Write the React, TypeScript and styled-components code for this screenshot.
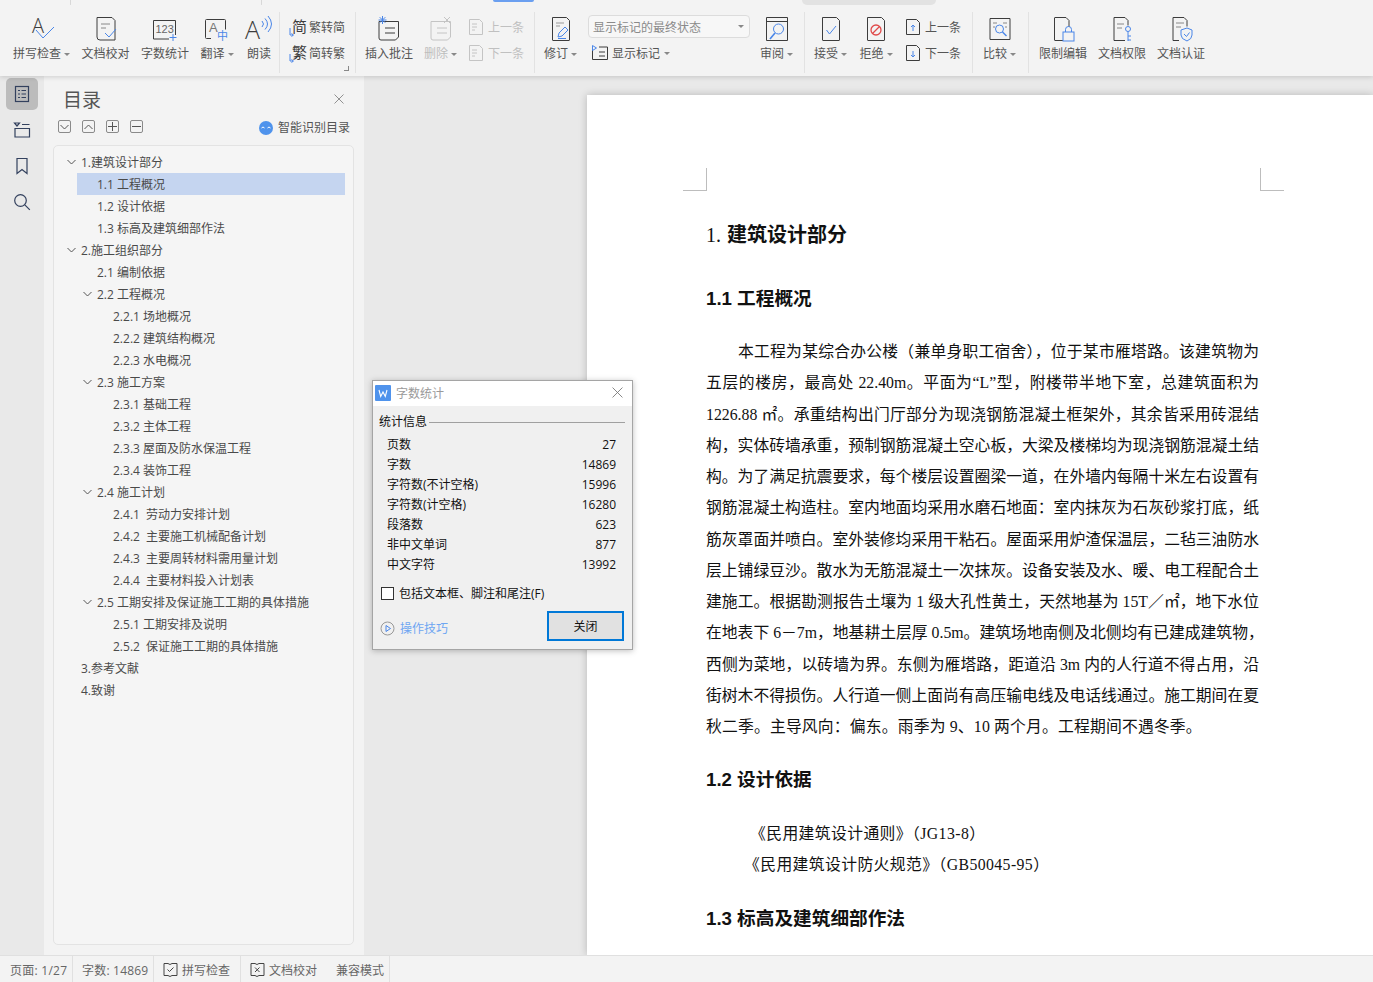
import React from "react";
import styled, { createGlobalStyle } from "styled-components";

const UI_FONT = `"Open Sans", "Noto Sans CJK SC", sans-serif`;
const DOC_FONT = `"Liberation Serif", "Noto Sans CJK SC", serif`;
const BLUE = "#4a86e8";
const INK = "#3c3c3c";

const GlobalStyle = createGlobalStyle`
  html, body {
    margin: 0;
    width: 1373px;
    height: 982px;
    overflow: hidden;
  }
  body {
    font-family: ${UI_FONT};
    font-size: 12px;
  }
  * { box-sizing: border-box; }
`;

const Shell = styled.div`
  position: relative;
  width: 1373px;
  height: 982px;
  display: flex;
  flex-direction: column;
  overflow: hidden;
  background: #e9e9e9;
`;

/* ribbon */
const Ribbon = styled.div`
  position: relative;
  z-index: 2;
  height: 76px;
  flex: none;
  display: flex;
  padding: 12px 0 3px;
  background: #f3f3f3;
  box-shadow: 0 1px 5px rgba(0, 0, 0, 0.16);
`;

const TabEdge = styled.div<{ $left: number; $width: number; $height: number; $color: string }>`
  position: absolute;
  top: 0;
  left: ${(p) => p.$left}px;
  width: ${(p) => p.$width}px;
  height: ${(p) => p.$height}px;
  background: ${(p) => p.$color};
  border-radius: 0 0 8px 8px;
`;

const Group = styled.div<{ $width: number; $pad?: number; $gap?: number; $last?: boolean }>`
  position: relative;
  width: ${(p) => p.$width}px;
  flex: none;
  display: flex;
  gap: ${(p) => p.$gap ?? 11}px;
  padding: 3px 0 0 ${(p) => p.$pad ?? 9}px;
  border-right: ${(p) => (p.$last ? "none" : "1px solid #e2e2e2")};
`;

const Launcher = styled.span`
  position: absolute;
  right: 6px;
  bottom: 2px;
  width: 5px;
  height: 5px;
  border-right: 1px solid #888;
  border-bottom: 1px solid #888;
`;

const Tool = styled.div<{ $off?: boolean }>`
  display: flex;
  flex-direction: column;
  align-items: center;
  flex: none;
  color: ${(p) => (p.$off ? "#bdbdbd" : "#555")};
  white-space: nowrap;
`;

const ToolIcon = styled.div`
  height: 28px;
  display: flex;
  align-items: center;
  justify-content: center;
`;

const ToolLabel = styled.div`
  height: 16px;
  margin-top: 3px;
  line-height: 16px;
  display: flex;
  align-items: center;
`;

const Caret = styled.i`
  width: 0;
  height: 0;
  margin-left: 3px;
  border-left: 3px solid transparent;
  border-right: 3px solid transparent;
  border-top: 3px solid #888;
`;

const SmallStack = styled.div`
  display: flex;
  flex-direction: column;
  gap: 2px;
  flex: none;
`;

const SmallTool = styled.div<{ $off?: boolean }>`
  height: 24px;
  display: flex;
  align-items: center;
  gap: 2px;
  color: ${(p) => (p.$off ? "#c0c0c0" : "#555")};
  white-space: nowrap;
`;

const MarkupColumn = styled.div`
  width: 162px;
  margin-right: -1px;
  flex: none;
  display: flex;
  flex-direction: column;
`;

const MarkupSelect = styled.div`
  height: 23px;
  display: flex;
  align-items: center;
  justify-content: space-between;
  padding: 0 5px 0 4px;
  color: #8a8a8a;
  background: #f7f7f7;
  border: 1px solid #dcdcdc;
  border-radius: 4px;
`;

const MarkupToggle = styled.div`
  height: 16px;
  margin-top: 7px;
  padding-left: 3px;
  display: flex;
  align-items: center;
  gap: 3px;
  color: #555;
  ${Caret} {
    margin-left: 1px;
  }
`;

/* main area */
const Main = styled.div`
  flex: 1;
  min-height: 0;
  display: flex;
`;

const Rail = styled.div`
  width: 44px;
  flex: none;
  display: flex;
  flex-direction: column;
  align-items: center;
  gap: 4px;
  padding-top: 2px;
  background: #e9e9e9;
`;

const RailButton = styled.div<{ $active?: boolean }>`
  width: 32px;
  height: 32px;
  display: flex;
  align-items: center;
  justify-content: center;
  border-radius: 5px;
  background: ${(p) => (p.$active ? "#bcbcbc" : "transparent")};
`;

const Panel = styled.div`
  width: 320px;
  flex: none;
  display: flex;
  flex-direction: column;
  background: #f3f3f3;
`;

const PanelHead = styled.div`
  height: 44px;
  flex: none;
  display: flex;
  align-items: center;
  justify-content: space-between;
  padding: 2px 20px 0 19px;
`;

const PanelTitle = styled.div`
  margin-top: 2px;
  font-size: 19px;
  line-height: 24px;
  color: #555;
`;

const PanelTools = styled.div`
  height: 25px;
  flex: none;
  display: flex;
  align-items: flex-start;
  gap: 11px;
  padding: 0 14px 0 14px;
`;

const SquareButton = styled.div`
  width: 13px;
  height: 13px;
  display: flex;
  align-items: center;
  justify-content: center;
  border: 1px solid #8a8a8a;
  border-radius: 2px;
`;

const SmartLink = styled.div`
  margin: 1px 0 0 auto;
  display: flex;
  align-items: center;
  gap: 5px;
  color: #555;
  line-height: 14px;
`;

const TreeBox = styled.div`
  width: 301px;
  height: 800px;
  margin-left: 9px;
  padding-top: 5px;
  background: #f5f5f5;
  border: 1px solid #e3e3e3;
  border-radius: 5px;
`;

const TreeRow = styled.div<{ $level: number; $selected?: boolean }>`
  height: 22px;
  margin: 0 8px 0 ${(p) => 7 + (p.$level - 1) * 16}px;
  display: flex;
  align-items: center;
  color: #4a4a4a;
  white-space: pre;
  background: ${(p) => (p.$selected ? "#c5d5f0" : "transparent")};
`;

const ChevronSlot = styled.span`
  width: 20px;
  flex: none;
  display: flex;
  justify-content: center;
`;

/* document */
const DocArea = styled.div`
  flex: 1;
  min-width: 0;
  padding: 19px 0 0 223px;
  overflow: hidden;
  background: #e9e9e9;
`;

const Page = styled.div`
  height: 100%;
  padding: 73px 0 0 96px;
  overflow: hidden;
  background: #fff;
  box-shadow: 0 0 8px rgba(0, 0, 0, 0.22);
`;

const CropRow = styled.div`
  width: 601px;
  height: 23px;
  display: flex;
  justify-content: space-between;
`;

const CropMark = styled.div<{ $side: "left" | "right" }>`
  width: 24px;
  height: 23px;
  border-bottom: 1px solid #bdbdbd;
  border-${(p) => (p.$side === "left" ? "right" : "left")}: 1px solid #bdbdbd;
`;

const DocBody = styled.div`
  width: 553px;
  margin-left: 23px;
  color: #111;
  font-family: ${DOC_FONT};
`;

const Heading1 = styled.div`
  margin-top: 30px;
  height: 28px;
  line-height: 28px;
  font-size: 20px;
  font-weight: 700;
  color: #111;
`;

const HeadingNumber = styled.span`
  margin-right: 1px;
  font-weight: 400;
`;

const Heading2 = styled.div<{ $top: number }>`
  margin-top: ${(p) => p.$top}px;
  height: 28px;
  line-height: 28px;
  font-size: 18.67px;
  font-weight: 700;
  font-family: "Liberation Sans", "Noto Sans CJK SC", sans-serif;
`;

const BodyText = styled.div`
  margin-top: 23px;
  font-size: 15.8px;
`;

const BodyLine = styled.div<{ $first?: boolean; $last?: boolean }>`
  height: 31.25px;
  line-height: 31.25px;
  padding-left: ${(p) => (p.$first ? 32 : 0)}px;
  white-space: nowrap;
  text-align: justify;
  text-align-last: ${(p) => (p.$last ? "left" : "justify")};
  letter-spacing: ${(p) => (p.$last ? 0.18 : 0)}px;
`;

const RefList = styled.div`
  margin-top: 24px;
  font-size: 15.8px;
  letter-spacing: 0.4px;
`;

const RefLine = styled.div<{ $indent: number }>`
  height: 31px;
  line-height: 31px;
  padding-left: ${(p) => p.$indent}px;
  white-space: nowrap;
`;

/* status bar */
const StatusBar = styled.div`
  height: 27px;
  flex: none;
  display: flex;
  align-items: center;
  background: #f3f3f3;
  border-top: 1px solid #e0e0e0;
  color: #666;
`;

const StatusCell = styled.div<{ $width: number; $pad: number; $track?: number }>`
  width: ${(p) => p.$width}px;
  height: 100%;
  flex: none;
  display: flex;
  align-items: center;
  gap: 4px;
  padding: 1px 0 0 ${(p) => p.$pad}px;
  border-right: 1px solid #e0e0e0;
  letter-spacing: ${(p) => p.$track ?? 0}px;
  white-space: nowrap;
`;

const StatusMode = styled.span`
  margin-left: 15px;
`;

/* word count dialog */
const Dialog = styled.div`
  position: absolute;
  z-index: 5;
  left: 372px;
  top: 380px;
  width: 261px;
  height: 270px;
  display: flex;
  flex-direction: column;
  background: #f0f0f0;
  border: 1px solid #a5a5a5;
  box-shadow: 0 1px 6px rgba(0, 0, 0, 0.25);
  color: #111;
`;

const DialogTitle = styled.div`
  height: 25px;
  flex: none;
  display: flex;
  align-items: center;
  gap: 5px;
  padding: 0 9px 2px 2px;
  background: #fff;
  color: #9a9a9a;
`;

const DialogCaption = styled.span`
  flex: 1;
`;

const DialogBody = styled.div`
  flex: 1;
  display: flex;
  flex-direction: column;
  padding: 8px 7px 0 6px;
`;

const Legend = styled.div`
  height: 16px;
  display: flex;
  align-items: center;
  gap: 2px;
  line-height: 16px;
  &::after {
    content: "";
    flex: 1;
    height: 1px;
    background: #a0a0a0;
  }
`;

const StatList = styled.div`
  margin-top: 4px;
  padding: 0 9px 0 8px;
`;

const StatRow = styled.div`
  height: 20px;
  display: flex;
  align-items: center;
  justify-content: space-between;
`;

const CheckRow = styled.div`
  margin: 9px 0 0 2px;
  height: 20px;
  display: flex;
  align-items: center;
  gap: 5px;
`;

const CheckBox = styled.span`
  width: 13px;
  height: 13px;
  background: #fff;
  border: 1px solid #333;
`;

const DialogFoot = styled.div`
  margin-top: 8px;
  padding-left: 1px;
  display: flex;
  align-items: center;
`;

const TipLink = styled.div`
  margin-top: 4px;
  display: flex;
  align-items: center;
  gap: 5px;
  color: #6ea6f2;
`;

const CloseButton = styled.div`
  width: 77px;
  height: 30px;
  margin: 0 1px 0 auto;
  display: flex;
  align-items: center;
  justify-content: center;
  color: #111;
  background: #e1e1e1;
  border: 2px solid #0078d7;
`;

/* drawings */
const Svg = styled.svg`
  display: block;
  flex: none;
  fill: none;
  stroke-width: 1;
  overflow: visible;
`;

const LightLetter = styled.text`
  font-family: "Open Sans", "Liberation Sans", sans-serif;
  font-weight: 300;
`;

type IconProps = { off?: boolean };

const ink = (off?: boolean) => (off ? "#c4c4c4" : INK);

const SpellIcon = () => (
  <Svg width="28" height="28" viewBox="0 0 28 28">
    <LightLetter x="4" y="18" fontSize="20" fill={INK}>A</LightLetter>
    <path d="M8 15l7 8L26 12" stroke={BLUE} />
  </Svg>
);

const ProofIcon = () => (
  <Svg width="28" height="28" viewBox="0 0 28 28">
    <path d="M5 2.500h15l3 3V25H8q-3 0-3-3z" stroke={INK} />
    <path d="M9 9h9M9 13h5" stroke="#888" />
    <path d="M13 18l4 4 7-8" stroke={BLUE} />
  </Svg>
);

const CountIcon = () => (
  <Svg width="28" height="28" viewBox="0 0 28 28">
    <path d="M2.500 5.500h22V20M2.500 5.500V24H18" stroke={INK} />
    <text x="4.500" y="18" fontSize="11" fontFamily="Liberation Sans" fill="#666">123</text>
    <path d="M22 19v7M18.500 22.500h7" stroke={BLUE} />
  </Svg>
);

const TranslateIcon = () => (
  <Svg width="28" height="28" viewBox="0 0 28 28">
    <path d="M8 23.500H3.500q-1 0-1-1V5.500q0-1 1-1h18q1 0 1 1v9" stroke={INK} />
    <text x="6" y="17" fontSize="13" fontFamily="Liberation Sans" fill="#777">A</text>
    <text x="14" y="25" fontSize="11" fontFamily="Noto Sans CJK SC" fill={BLUE}>中</text>
  </Svg>
);

const ReadIcon = () => (
  <Svg width="28" height="28" viewBox="0 0 28 28">
    <LightLetter x="0" y="24" fontSize="25" fill={INK}>A</LightLetter>
    <path d="M17 6q3 3 0 6M20 3.500q5 5.500 0 11M23 1q7 8 0 16" stroke={BLUE} />
  </Svg>
);

const ConvertIcon = ({ ch }: { ch: string }) => (
  <Svg width="18" height="22" viewBox="0 0 18 22">
    <text x="3" y="16" fontSize="15" fontFamily="Noto Sans CJK SC" fill={INK}>{ch}</text>
    <path d="M1 12v7h3M2.500 17.500L4.500 19l-2 1.500" stroke={BLUE} />
  </Svg>
);

const CommentIcon = ({ off }: IconProps) => (
  <Svg width="28" height="28" viewBox="0 0 28 28">
    <path d="M4 6.500h19.500V22l-3 3H6q-2 0-2-2z" stroke={ink(off)} />
    <path d="M10 13h10M10 18h10" stroke={ink(off)} />
    {off ? (
      <path d="M17 2l6 6M23 2l-6 6" stroke="#c4c4c4" />
    ) : (
      <path d="M7.500 1v8M3.500 5h8M4.700 2.200l5.600 5.600M10.300 2.200L4.700 7.800" stroke={BLUE} />
    )}
  </Svg>
);

const PrevNextIcon = ({ off, down }: IconProps & { down?: boolean }) => (
  <Svg width="18" height="18" viewBox="0 0 18 18">
    <path d="M1.500 1.500h10l3 3v12h-13z" stroke={ink(off)} />
    {off ? (
      <path d="M4 6h5M4 9h5M4 12h3" stroke="#c4c4c4" />
    ) : down ? (
      <path d="M8 7v6M6 11l2 2 2-2" stroke={BLUE} />
    ) : (
      <path d="M8 13V7M6 9l2-2 2 2" stroke={BLUE} />
    )}
  </Svg>
);

const PageBase = ({ children }: { children?: React.ReactNode }) => (
  <Svg width="28" height="28" viewBox="0 0 28 28">
    <path d="M5.500 2.500h14l3 3V25q0 .5-.5.5H6q-.5 0-.5-.5z" stroke={INK} />
    {children}
  </Svg>
);

const ReviseIcon = () => (
  <PageBase>
    <path d="M9 8h8M9 11h4" stroke="#999" />
    <path d="M11 22l1-4 6-6 3 3-6 6zM11 23.500h8" stroke={BLUE} />
  </PageBase>
);

const ReviewIcon = () => (
  <Svg width="28" height="28" viewBox="0 0 28 28">
    <path d="M3.500 2.500h21v23h-21zM3.500 6.500h21" stroke={INK} />
    <circle cx="15.500" cy="14" r="5" stroke={BLUE} />
    <path d="M12 18l-5 6" stroke={BLUE} strokeWidth="1.600" />
  </Svg>
);

const AcceptIcon = () => (
  <PageBase>
    <path d="M9.500 15l3 4 6.500-8" stroke={BLUE} />
  </PageBase>
);

const RejectIcon = () => (
  <PageBase>
    <circle cx="14" cy="15" r="5" stroke="#e04a4a" strokeWidth="1.300" />
    <path d="M10.500 18.500l7-7" stroke="#e04a4a" strokeWidth="1.300" />
  </PageBase>
);

const CompareIcon = () => (
  <Svg width="28" height="28" viewBox="0 0 28 28">
    <path d="M4 3.500h20v21H4z" stroke={INK} />
    <path d="M7 8h4M17 8h4M7 12h2M19 12h2" stroke="#888" />
    <circle cx="13.500" cy="14" r="4" stroke={BLUE} />
    <path d="M16.500 17l4 4" stroke={BLUE} strokeWidth="1.400" />
  </Svg>
);

const LockIcon = () => (
  <Svg width="28" height="28" viewBox="0 0 28 28">
    <path d="M14 25.500H6q-.5 0-.5-.5V3q0-.5.500-.5h11l3 3V12" stroke={INK} />
    <rect x="14" y="17" width="11" height="9" stroke={BLUE} />
    <path d="M16.500 17v-2.500a3 3 0 0 1 6 0V17" stroke={BLUE} />
  </Svg>
);

const KeyIcon = () => (
  <Svg width="28" height="28" viewBox="0 0 28 28">
    <path d="M17 25.500H6V2.500h11l3 3v5" stroke={INK} />
    <path d="M9 9h7M9 13h5" stroke="#888" />
    <circle cx="20" cy="14" r="2.500" stroke={BLUE} />
    <path d="M20 16.500V26M20 21h3M20 25h3" stroke={BLUE} />
  </Svg>
);

const ShieldIcon = () => (
  <Svg width="28" height="28" viewBox="0 0 28 28">
    <path d="M12 25.500H6V2.500h11l3 3v6" stroke={INK} />
    <path d="M9 8h8M9 12h5" stroke="#888" />
    <path d="M14 15l6-2 5 2v5q0 4-5 6-6-2-6-6z" stroke={BLUE} />
    <path d="M17 19l2.500 2.500 3-4" stroke={BLUE} />
  </Svg>
);

const MarkupIcon = () => (
  <Svg width="18" height="16" viewBox="0 0 18 16">
    <path d="M1.500 4v10.500h15V2H8" stroke={INK} />
    <path d="M8 7h6M8 11h6" stroke={INK} />
    <path d="M1.500 0.500v5l4-2.500z" stroke={BLUE} />
  </Svg>
);

const Cross = ({ size, color }: { size: number; color: string }) => (
  <Svg width={size} height={size} viewBox="0 0 10 10">
    <path d="M.5.500l9 9M9.500.500l-9 9" stroke={color} strokeWidth={0.8} />
  </Svg>
);

const Chevron = ({ up }: { up?: boolean }) => (
  <Svg width="9" height="6" viewBox="0 0 9 6">
    <path d={up ? "M.5 5L4.500 1l4 4" : "M.5 1l4 4 4-4"} stroke="#555" />
  </Svg>
);

const RAIL_COLOR = "#33415e";

const RailOutline = () => (
  <Svg width="16" height="18" viewBox="0 0 16 18">
    <rect x="1.500" y="1.500" width="13" height="15" stroke={RAIL_COLOR} strokeWidth="1.200" />
    <path d="M4 5.500h2M7.500 5.500H12M4 9h2M7.500 9H12M4 12.500h2M7.500 12.500H12" stroke={RAIL_COLOR} />
  </Svg>
);

const RailFolder = () => (
  <Svg width="18" height="16" viewBox="0 0 18 16">
    <path d="M1.500 1h5l-2.500 3zM9 2.500h7.500M2 6.500h14.500v8.500H2z" stroke={RAIL_COLOR} strokeWidth="1.200" />
  </Svg>
);

const RailBookmark = () => (
  <Svg width="14" height="18" viewBox="0 0 14 18">
    <path d="M2 1.500h10v15l-5-4-5 4z" stroke={RAIL_COLOR} strokeWidth="1.200" />
  </Svg>
);

const RailSearch = () => (
  <Svg width="18" height="18" viewBox="0 0 18 18">
    <circle cx="7.500" cy="7.500" r="5.800" stroke={RAIL_COLOR} strokeWidth="1.200" />
    <path d="M11.800 11.800l5 5" stroke={RAIL_COLOR} strokeWidth="1.200" />
  </Svg>
);

const SmartIcon = () => (
  <Svg width="14" height="14" viewBox="0 0 14 14">
    <circle cx="7" cy="7" r="7" fill="#4f93ec" />
    <path d="M2.500 7q1.500-2 3 0M8.500 7q1.500-2 3 0" stroke="#fff" />
  </Svg>
);

const StatusCheck = ({ cross }: { cross?: boolean }) => (
  <Svg width="15" height="15" viewBox="0 0 15 15">
    <path d="M1 1.500h4l2 1 2-1h5v12H9l-2 1-2-1H1z" stroke="#444" />
    <path d={cross ? "M5 5.500l4.500 4.500M9.500 5.500L5 10" : "M4.500 7.500l2 2 4-4"} stroke="#444" />
  </Svg>
);

const WpsLogo = () => (
  <Svg width="16" height="16" viewBox="0 0 16 16">
    <rect width="16" height="16" rx="1" fill="#4f93ec" />
    <path d="M4 5l1.700 6.500L8 7l2.300 4.500L12 5" stroke="#fff" strokeWidth="1.100" />
  </Svg>
);

const PlayIcon = () => (
  <Svg width="15" height="15" viewBox="0 0 15 15">
    <circle cx="7.500" cy="7.500" r="6.500" stroke="#999" />
    <path d="M6 4.500v6l4.500-3z" stroke={BLUE} />
  </Svg>
);

/* data */
type TreeItem = { level: number; text: string; open?: boolean; selected?: boolean };

const tree: TreeItem[] = [
  { level: 1, text: "1.建筑设计部分", open: true },
  { level: 2, text: "1.1 工程概况", selected: true },
  { level: 2, text: "1.2 设计依据" },
  { level: 2, text: "1.3 标高及建筑细部作法" },
  { level: 1, text: "2.施工组织部分", open: true },
  { level: 2, text: "2.1 编制依据" },
  { level: 2, text: "2.2 工程概况", open: true },
  { level: 3, text: "2.2.1 场地概况" },
  { level: 3, text: "2.2.2 建筑结构概况" },
  { level: 3, text: "2.2.3 水电概况" },
  { level: 2, text: "2.3 施工方案", open: true },
  { level: 3, text: "2.3.1 基础工程" },
  { level: 3, text: "2.3.2 主体工程" },
  { level: 3, text: "2.3.3 屋面及防水保温工程" },
  { level: 3, text: "2.3.4 装饰工程" },
  { level: 2, text: "2.4 施工计划", open: true },
  { level: 3, text: "2.4.1  劳动力安排计划" },
  { level: 3, text: "2.4.2  主要施工机械配备计划" },
  { level: 3, text: "2.4.3  主要周转材料需用量计划" },
  { level: 3, text: "2.4.4  主要材料投入计划表" },
  { level: 2, text: "2.5 工期安排及保证施工工期的具体措施", open: true },
  { level: 3, text: "2.5.1 工期安排及说明" },
  { level: 3, text: "2.5.2  保证施工工期的具体措施" },
  { level: 1, text: "3.参考文献" },
  { level: 1, text: "4.致谢" },
];

const stats = [
  ["页数", "27"],
  ["字数", "14869"],
  ["字符数(不计空格)", "15996"],
  ["字符数(计空格)", "16280"],
  ["段落数", "623"],
  ["非中文单词", "877"],
  ["中文字符", "13992"],
];

const bodyLines = [
  "本工程为某综合办公楼（兼单身职工宿舍），位于某市雁塔路。该建筑物为",
  "五层的楼房，最高处 22.40m。平面为“L”型，附楼带半地下室，总建筑面积为",
  "1226.88 ㎡。承重结构出门厅部分为现浇钢筋混凝土框架外，其余皆采用砖混结",
  "构，实体砖墙承重，预制钢筋混凝土空心板，大梁及楼梯均为现浇钢筋混凝土结",
  "构。为了满足抗震要求，每个楼层设置圈梁一道，在外墙内每隔十米左右设置有",
  "钢筋混凝土构造柱。室内地面均采用水磨石地面：室内抹灰为石灰砂浆打底，纸",
  "筋灰罩面并喷白。室外装修均采用干粘石。屋面采用炉渣保温层，二毡三油防水",
  "层上铺绿豆沙。散水为无筋混凝土一次抹灰。设备安装及水、暖、电工程配合土",
  "建施工。根据勘测报告土壤为 1 级大孔性黄土，天然地基为 15T／㎡，地下水位",
  "在地表下 6－7m，地基耕土层厚 0.5m。建筑场地南侧及北侧均有已建成建筑物，",
  "西侧为菜地，以砖墙为界。东侧为雁塔路，距道沿 3m 内的人行道不得占用，沿",
  "街树木不得损伤。人行道一侧上面尚有高压输电线及电话线通过。施工期间在夏",
  "秋二季。主导风向：偏东。雨季为 9、10 两个月。工程期间不遇冬季。",
];

function RibbonTool({
  icon,
  label,
  caret,
  off,
}: {
  icon: React.ReactNode;
  label: string;
  caret?: boolean;
  off?: boolean;
}) {
  return (
    <Tool $off={off}>
      <ToolIcon>{icon}</ToolIcon>
      <ToolLabel>
        {label}
        {caret && <Caret />}
      </ToolLabel>
    </Tool>
  );
}

function PrevNext({ off }: IconProps) {
  return (
    <SmallStack>
      <SmallTool $off={off}>
        <PrevNextIcon off={off} />
        上一条
      </SmallTool>
      <SmallTool $off={off}>
        <PrevNextIcon off={off} down />
        下一条
      </SmallTool>
    </SmallStack>
  );
}

export default function App() {
  return (
    <Shell>
      <GlobalStyle />
      <Ribbon>
        <TabEdge $left={70} $width={1} $height={5} $color="#d8d8d8" />
        <TabEdge $left={261} $width={1} $height={5} $color="#d8d8d8" />
        <TabEdge $left={493} $width={41} $height={2} $color="#6a9ff0" />
        <TabEdge $left={802} $width={134} $height={5} $color="#e2e2e2" />

        <Group $width={280} $pad={13} $gap={11.5}>
          <RibbonTool icon={<SpellIcon />} label="拼写检查" caret />
          <RibbonTool icon={<ProofIcon />} label="文档校对" />
          <RibbonTool icon={<CountIcon />} label="字数统计" />
          <RibbonTool icon={<TranslateIcon />} label="翻译" caret />
          <RibbonTool icon={<ReadIcon />} label="朗读" />
        </Group>
        <Group $width={76}>
          <SmallStack>
            <SmallTool>
              <ConvertIcon ch="简" />
              繁转简
            </SmallTool>
            <SmallTool>
              <ConvertIcon ch="繁" />
              简转繁
            </SmallTool>
          </SmallStack>
          <Launcher />
        </Group>
        <Group $width={179}>
          <RibbonTool icon={<CommentIcon />} label="插入批注" />
          <RibbonTool icon={<CommentIcon off />} label="删除" caret off />
          <PrevNext off />
        </Group>
        <Group $width={270}>
          <RibbonTool icon={<ReviseIcon />} label="修订" caret />
          <MarkupColumn>
            <MarkupSelect>
              显示标记的最终状态
              <Caret />
            </MarkupSelect>
            <MarkupToggle>
              <MarkupIcon />
              显示标记
              <Caret />
            </MarkupToggle>
          </MarkupColumn>
          <RibbonTool icon={<ReviewIcon />} label="审阅" caret />
        </Group>
        <Group $width={168} $gap={12.5}>
          <RibbonTool icon={<AcceptIcon />} label="接受" caret />
          <RibbonTool icon={<RejectIcon />} label="拒绝" caret />
          <PrevNext />
        </Group>
        <Group $width={56} $pad={10}>
          <RibbonTool icon={<CompareIcon />} label="比较" caret />
        </Group>
        <Group $width={200} $pad={10} $last>
          <RibbonTool icon={<LockIcon />} label="限制编辑" />
          <RibbonTool icon={<KeyIcon />} label="文档权限" />
          <RibbonTool icon={<ShieldIcon />} label="文档认证" />
        </Group>
      </Ribbon>

      <Main>
        <Rail>
          <RailButton $active>
            <RailOutline />
          </RailButton>
          <RailButton>
            <RailFolder />
          </RailButton>
          <RailButton>
            <RailBookmark />
          </RailButton>
          <RailButton>
            <RailSearch />
          </RailButton>
        </Rail>

        <Panel>
          <PanelHead>
            <PanelTitle>目录</PanelTitle>
            <Cross size={10} color="#777" />
          </PanelHead>
          <PanelTools>
            <SquareButton>
              <Chevron />
            </SquareButton>
            <SquareButton>
              <Chevron up />
            </SquareButton>
            <SquareButton>
              <Svg width="9" height="9" viewBox="0 0 9 9">
                <path d="M4.500 0v9M0 4.500h9" stroke="#555" />
              </Svg>
            </SquareButton>
            <SquareButton>
              <Svg width="9" height="9" viewBox="0 0 9 9">
                <path d="M0 4.500h9" stroke="#555" />
              </Svg>
            </SquareButton>
            <SmartLink>
              <SmartIcon />
              智能识别目录
            </SmartLink>
          </PanelTools>
          <TreeBox>
            {tree.map((item) => (
              <TreeRow key={item.text} $level={item.level} $selected={item.selected}>
                <ChevronSlot>{item.open && <Chevron />}</ChevronSlot>
                {item.text}
              </TreeRow>
            ))}
          </TreeBox>
        </Panel>

        <DocArea>
          <Page>
            <CropRow>
              <CropMark $side="left" />
              <CropMark $side="right" />
            </CropRow>
            <DocBody>
              <Heading1>
                <HeadingNumber>1.</HeadingNumber> 建筑设计部分
              </Heading1>
              <Heading2 $top={36}>1.1 工程概况</Heading2>
              <BodyText>
                {bodyLines.map((line, i) => (
                  <BodyLine key={line} $first={i === 0} $last={i === bodyLines.length - 1}>
                    {line}
                  </BodyLine>
                ))}
              </BodyText>
              <Heading2 $top={24}>1.2 设计依据</Heading2>
              <RefList>
                <RefLine $indent={44}>《民用建筑设计通则》（JG13-8）</RefLine>
                <RefLine $indent={38}>《民用建筑设计防火规范》（GB50045-95）</RefLine>
              </RefList>
              <Heading2 $top={25}>1.3 标高及建筑细部作法</Heading2>
            </DocBody>
          </Page>
        </DocArea>
      </Main>

      <StatusBar>
        <StatusCell $width={73} $pad={10} $track={0.25}>页面: 1/27</StatusCell>
        <StatusCell $width={81} $pad={9} $track={0.2}>字数: 14869</StatusCell>
        <StatusCell $width={87} $pad={9}>
          <StatusCheck />
          拼写检查
        </StatusCell>
        <StatusCell $width={149} $pad={9}>
          <StatusCheck cross />
          文档校对
          <StatusMode>兼容模式</StatusMode>
        </StatusCell>
      </StatusBar>

      <Dialog>
        <DialogTitle>
          <WpsLogo />
          <DialogCaption>字数统计</DialogCaption>
          <Cross size={11} color="#777" />
        </DialogTitle>
        <DialogBody>
          <Legend>统计信息</Legend>
          <StatList>
            {stats.map(([name, value]) => (
              <StatRow key={name}>
                <span>{name}</span>
                <span>{value}</span>
              </StatRow>
            ))}
          </StatList>
          <CheckRow>
            <CheckBox />
            包括文本框、脚注和尾注(F)
          </CheckRow>
          <DialogFoot>
            <TipLink>
              <PlayIcon />
              操作技巧
            </TipLink>
            <CloseButton>关闭</CloseButton>
          </DialogFoot>
        </DialogBody>
      </Dialog>
    </Shell>
  );
}
